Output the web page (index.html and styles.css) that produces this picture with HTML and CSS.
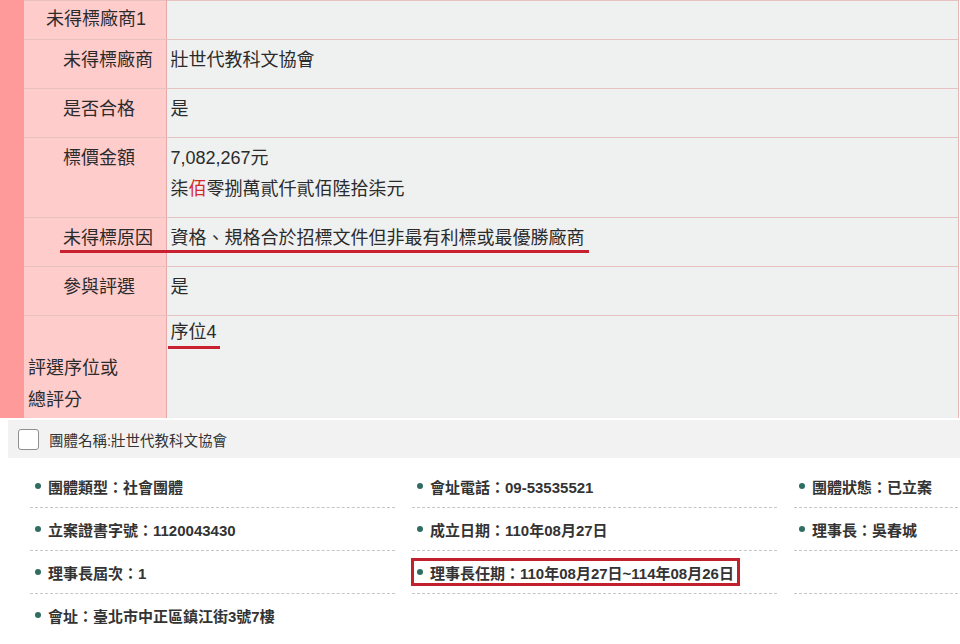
FILE: index.html
```html
<!DOCTYPE html>
<html lang="zh-Hant">
<head>
<meta charset="utf-8">
<title>未得標廠商</title>
<link rel="stylesheet" href="styles.css">
</head>
<body>
<div class="page">
  <section class="award">
    <div class="stripe"></div>
    <table class="grid">
      <colgroup><col class="c-label"><col class="c-value"></colgroup>
      <tr class="r-head"><td class="lbl lbl-head">未得標廠商1</td><td class="val"></td></tr>
      <tr><td class="lbl">未得標廠商</td><td class="val">壯世代教科文協會</td></tr>
      <tr><td class="lbl">是否合格</td><td class="val">是</td></tr>
      <tr><td class="lbl">標價金額</td><td class="val">7,082,267元<br>柒<span class="red">佰</span>零捌萬貳仟貳佰陸拾柒元</td></tr>
      <tr><td class="lbl">未得標原因</td><td class="val mark-reason">資格、規格合於招標文件但非最有利標或最優勝廠商</td></tr>
      <tr><td class="lbl">參與評選</td><td class="val">是</td></tr>
      <tr class="r-last"><td class="lbl lbl-last">評選序位或<br>總評分</td><td class="val val-top"><span class="mark-rank">序位4</span></td></tr>
    </table>
  </section>
  <section class="org">
    <div class="org-head"><span class="check"></span><span class="org-name">團體名稱:壯世代教科文協會</span></div>
    <ul class="facts">
      <li><span class="dot"></span>團體類型：社會團體</li>
      <li><span class="dot"></span>會址電話：09-53535521</li>
      <li><span class="dot"></span>團體狀態：已立案</li>
      <li><span class="dot"></span>立案證書字號：1120043430</li>
      <li><span class="dot"></span>成立日期：110年08月27日</li>
      <li><span class="dot"></span>理事長：吳春城</li>
      <li><span class="dot"></span>理事長屆次：1</li>
      <li><span class="boxed"><span class="dot"></span>理事長任期：110年08月27日~114年08月26日</span></li>
      <li class="empty"></li>
      <li class="last"><span class="dot"></span>會址：臺北市中正區鎮江街3號7樓</li>
    </ul>
  </section>
</div>
</body>
</html>
```

FILE: styles.css
```css
html, body {
  margin: 0;
  padding: 0;
  background: #ffffff;
}

.page {
  width: 960px;
  height: 644px;
  overflow: hidden;
  font-family: "Liberation Sans", "Noto Sans CJK TC", sans-serif;
  color: #333333;
}

/* ---------- top table ---------- */
.award {
  display: flex;
  align-items: stretch;
}

.stripe {
  width: 24px;
  flex: none;
  background: #ff9a9a;
}

.grid {
  width: 935px;
  border-collapse: collapse;
  table-layout: fixed;
  font-size: 18px;
  line-height: 31px;
  color: #2b2b2b;
}

.c-label { width: 142px; }

.grid td {
  border-top: 1px solid #e7c0c0;
  border-bottom: 1px solid #e7c0c0;
  padding: 5px 4px 12px 4px;
  vertical-align: top;
}

.lbl {
  background: #ffcccc;
  padding-left: 39px !important;
  border-right: 1px solid #e6a9a9;
  white-space: nowrap;
}

.val {
  background: #eff0f0;
  border-right: 1px solid #e8b4b4;
}

.r-head td {
  padding-top: 3px;
  padding-bottom: 4px;
}

.lbl-head {
  padding-left: 22px !important;
}

.r-last td {
  height: 99px;
  padding-top: 1px;
  padding-bottom: 2px;
  border-bottom: none;
}

.lbl-last {
  padding-left: 4px !important;
  vertical-align: bottom !important;
  line-height: 32px;
}

.red { color: #d42a2a; }

.mark-reason {
  position: relative;
}

.mark-reason::after {
  content: "";
  position: absolute;
  left: -107px;
  width: 529px;
  top: 32px;
  height: 3px;
  background: #c8202f;
}

.mark-rank {
  position: relative;
}

.mark-rank::after {
  content: "";
  position: absolute;
  left: -3px;
  width: 52px;
  bottom: -7px;
  height: 3px;
  background: #c8202f;
}

/* ---------- organisation block ---------- */
.org {
  padding: 2px 0 0 8px;
}

.org-head {
  height: 38px;
  background: #f2f2f2;
  display: flex;
  align-items: center;
  padding-left: 10px;
}

.check {
  width: 19px;
  height: 19px;
  border: 1px solid #8f8f8f;
  border-radius: 3px;
  background: #ffffff;
  margin-right: 10px;
  flex: none;
}

.org-name {
  font-size: 14.5px;
  color: #333333;
}

.facts {
  list-style: none;
  margin: 7px 0 0 22px;
  padding: 0;
  display: grid;
  grid-template-columns: repeat(3, 365px);
  column-gap: 17px;
  width: 1129px;
  font-size: 15px;
  font-weight: bold;
  color: #333333;
}

.facts li {
  height: 42px;
  border-bottom: 1px dashed #c6c6c6;
  display: flex;
  align-items: center;
  padding-left: 5px;
  white-space: nowrap;
}

.facts li.last {
  border-bottom: none;
}

.dot {
  width: 6px;
  height: 6px;
  border-radius: 50%;
  background: #2f6d60;
  margin-right: 7px;
  flex: none;
}

.boxed {
  display: inline-flex;
  align-items: center;
  border: 3px solid #c3202e;
  height: 22px;
  padding: 0 3px 0 3px;
  margin-left: -6px;
}
```
